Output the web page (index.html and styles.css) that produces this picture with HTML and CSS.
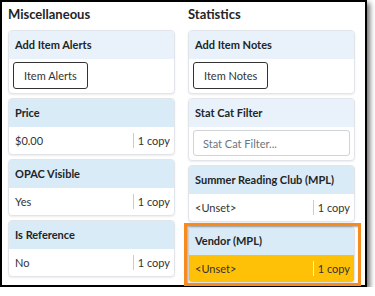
FILE: index.html
```html
<!DOCTYPE html>
<html lang="en">
<head>
  <meta charset="UTF-8">
  <meta name="viewport" content="width=device-width, initial-scale=1.0">
  <title>Holdings Editor</title>
  <link rel="stylesheet" href="styles.css">
</head>
<body>
  <div class="frame">
    <div class="columns">
      <div class="column">
        <h2>Miscellaneous</h2>
        <div class="card">
          <div class="card-header light">Add Item Alerts</div>
          <div class="card-body">
            <button class="btn">Item Alerts</button>
          </div>
        </div>
        <div class="card">
          <div class="card-header">Price</div>
          <div class="value-row">
            <span class="value">$0.00</span>
            <span class="count">1 copy</span>
          </div>
        </div>
        <div class="card">
          <div class="card-header">OPAC Visible</div>
          <div class="value-row">
            <span class="value">Yes</span>
            <span class="count">1 copy</span>
          </div>
        </div>
        <div class="card">
          <div class="card-header">Is Reference</div>
          <div class="value-row">
            <span class="value">No</span>
            <span class="count">1 copy</span>
          </div>
        </div>
      </div>

      <div class="column">
        <h2>Statistics</h2>
        <div class="card">
          <div class="card-header light">Add Item Notes</div>
          <div class="card-body">
            <button class="btn">Item Notes</button>
          </div>
        </div>
        <div class="card">
          <div class="card-header light">Stat Cat Filter</div>
          <div class="card-body">
            <input class="filter" type="text" placeholder="Stat Cat Filter...">
          </div>
        </div>
        <div class="card">
          <div class="card-header">Summer Reading Club (MPL)</div>
          <div class="value-row">
            <span class="value">&lt;Unset&gt;</span>
            <span class="count">1 copy</span>
          </div>
        </div>
        <div class="card highlighted">
          <div class="card-header">Vendor (MPL)</div>
          <div class="value-row changed">
            <span class="value">&lt;Unset&gt;</span>
            <span class="count">1 copy</span>
          </div>
          <div class="callout"></div>
        </div>
      </div>
    </div>
  </div>
</body>
</html>
```

FILE: styles.css
```css
/* Reset */
* {
  box-sizing: border-box;
  margin: 0;
  padding: 0;
}

body {
  font-family: Lato, Arial, sans-serif;
  font-size: 11px;
  color: #212529;
  background: #fff;
}

/* Screenshot frame */
.frame {
  width: 367px;
  height: 287px;
  border: 2px solid #000;
  box-shadow: 3px 3px 5px rgba(0, 0, 0, 0.55);
  padding: 3px 0 0 6px;
}

.columns {
  display: flex;
  gap: 13px;
}

.column {
  width: 167px;
  display: flex;
  flex-direction: column;
  gap: 4px;
}

h2 {
  font-size: 13px;
  font-weight: bold;
  line-height: 18px;
  margin-bottom: 3px;
}

/* Cards */
.card {
  position: relative;
  background: #fff;
  border: 1px solid #e1e5ea;
  border-radius: 4px;
  box-shadow: 0 1px 2px rgba(0, 0, 0, 0.08);
}

.card-header {
  height: 28px;
  line-height: 28px;
  padding: 0 6px;
  font-weight: bold;
  background: #d9ebf6;
  border-radius: 3px 3px 0 0;
}

.card-header.light {
  background: #e9f2fa;
}

.card-body {
  padding: 3px 4px 4px;
}

.btn {
  font-family: inherit;
  font-size: 11px;
  color: #333;
  background: #fff;
  border: 1px solid #333;
  border-radius: 3px;
  height: 27px;
  padding: 0 10px;
}

.filter {
  width: 100%;
  height: 26px;
  font-family: inherit;
  font-size: 11px;
  padding: 0 9px;
  border: 1px solid #ced4da;
  border-radius: 3px;
}

.filter::placeholder {
  color: #6c757d;
}

.value-row {
  display: flex;
  align-items: center;
  height: 27px;
  padding: 0 4px 0 6px;
  color: #333;
}

.value {
  flex: 1;
}

.count {
  border-left: 1px solid #ccc;
  padding-left: 4px;
  line-height: 15px;
}

/* Changed value */
.value-row.changed {
  background: #ffc107;
  border-radius: 0 0 3px 3px;
}

.value-row.changed .count {
  border-left-color: #fff3cd;
}

/* Annotation box */
.callout {
  position: absolute;
  top: -4px;
  left: -5px;
  right: -7px;
  bottom: -4px;
  border: 3px solid #f68b1f;
  box-shadow: inset 1px 1px 2px rgba(0, 0, 0, 0.35);
}
```
